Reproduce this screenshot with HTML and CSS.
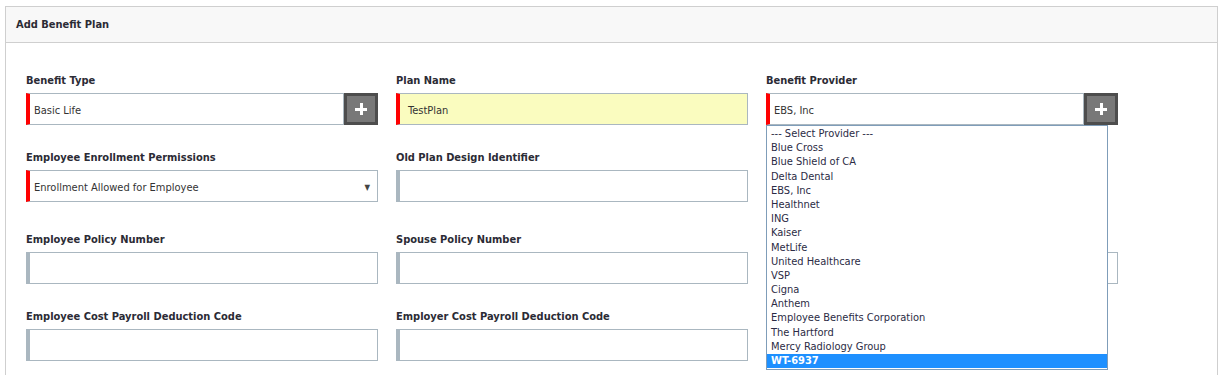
FILE: index.html
```html
<!DOCTYPE html>
<html>
<head>
<meta charset="utf-8">
<link rel="stylesheet" href="styles.css">
</head>
<body>
<div class="panel">
  <div class="panel-header">Add Benefit Plan</div>
  <div class="panel-body">
    <div class="row">
      <div class="field">
        <div class="label">Benefit Type</div>
        <div class="combo">
          <div class="input required">Basic Life</div>
          <div class="add-btn"><span class="plus"></span></div>
        </div>
      </div>
      <div class="field">
        <div class="label">Plan Name</div>
        <div class="input required filled">TestPlan</div>
      </div>
      <div class="field provider">
        <div class="label">Benefit Provider</div>
        <div class="combo">
          <div class="input required">EBS, Inc</div>
          <div class="add-btn"><span class="plus"></span></div>
        </div>
        <ul class="dropdown">
          <li>--- Select Provider ---</li>
          <li>Blue Cross</li>
          <li>Blue Shield of CA</li>
          <li>Delta Dental</li>
          <li>EBS, Inc</li>
          <li>Healthnet</li>
          <li>ING</li>
          <li>Kaiser</li>
          <li>MetLife</li>
          <li>United Healthcare</li>
          <li>VSP</li>
          <li>Cigna</li>
          <li>Anthem</li>
          <li>Employee Benefits Corporation</li>
          <li>The Hartford</li>
          <li>Mercy Radiology Group</li>
          <li class="selected">WT-6937</li>
        </ul>
      </div>
    </div>
    <div class="row tall">
      <div class="field">
        <div class="label">Employee Enrollment Permissions</div>
        <div class="input required select">Enrollment Allowed for Employee<span class="arrow">&#9660;</span></div>
      </div>
      <div class="field">
        <div class="label">Old Plan Design Identifier</div>
        <div class="input"></div>
      </div>
      <div class="field"></div>
    </div>
    <div class="row">
      <div class="field">
        <div class="label">Employee Policy Number</div>
        <div class="input"></div>
      </div>
      <div class="field">
        <div class="label">Spouse Policy Number</div>
        <div class="input"></div>
      </div>
      <div class="field">
        <div class="label">&nbsp;</div>
        <div class="input"></div>
      </div>
    </div>
    <div class="row">
      <div class="field">
        <div class="label">Employee Cost Payroll Deduction Code</div>
        <div class="input"></div>
      </div>
      <div class="field">
        <div class="label">Employer Cost Payroll Deduction Code</div>
        <div class="input"></div>
      </div>
      <div class="field"></div>
    </div>
  </div>
</div>
</body>
</html>
```

FILE: styles.css
```css
html, body {
  margin: 0;
  padding: 0;
  background: #fff;
  overflow: hidden;
}
body {
  font-family: "DejaVu Sans Condensed", "Liberation Sans", sans-serif;
  font-size: 11px;
  color: #333;
  height: 375px;
}
.panel {
  margin: 6px 2px 0 5px;
  border: 1px solid #cfcfcf;
  border-bottom: none;
  height: 369px;
  box-sizing: border-box;
}
.panel-header {
  height: 35px;
  line-height: 35px;
  background: #f8f8f8;
  border-bottom: 1px solid #cfcfcf;
  padding-left: 10px;
  font-weight: bold;
  color: #2b2b35;
}
.panel-body {
  padding: 31px 0 0 20px;
}
.row {
  display: grid;
  grid-template-columns: 352px 352px 352px;
  column-gap: 18px;
  margin-bottom: 26px;
}
.row.tall {
  margin-bottom: 31px;
}
.field {
  position: relative;
}
.label {
  font-weight: bold;
  line-height: 14px;
  margin-bottom: 5px;
  color: #2b2b35;
}
.combo {
  display: flex;
}
.combo .input {
  flex: 1;
}
.input {
  height: 32px;
  box-sizing: border-box;
  border: 1px solid #aab7c0;
  border-left: 4px solid #aab7c0;
  padding-left: 4px;
  padding-top: 2px;
  line-height: 30px;
  background: #fff;
  color: #333;
}
.input.required {
  border-left-color: #f00;
}
.input.filled {
  background: #fafcbf;
  padding-left: 8px;
}
.input.select {
  display: flex;
  justify-content: space-between;
  padding-right: 7px;
}
.arrow {
  font-size: 8px;
  color: #444;
}
.add-btn {
  width: 34px;
  height: 32px;
  box-sizing: border-box;
  background: #787878;
  border: 3px solid #4d4d4d;
  display: flex;
  align-items: center;
  justify-content: center;
}
.plus {
  position: relative;
  width: 12px;
  height: 12px;
}
.plus::before,
.plus::after {
  content: "";
  position: absolute;
  background: #fff;
}
.plus::before {
  left: 0;
  top: 5px;
  width: 12px;
  height: 3px;
}
.plus::after {
  left: 5px;
  top: 0;
  width: 3px;
  height: 12px;
}
.dropdown {
  position: absolute;
  left: 0;
  top: 51px;
  width: 342px;
  box-sizing: border-box;
  margin: 0;
  padding: 1px 0;
  list-style: none;
  background: #fff;
  border: 1px solid #7f9db9;
  z-index: 5;
}
.dropdown li {
  height: 14.2px;
  line-height: 14px;
  padding-left: 4px;
  color: #2b2b45;
  white-space: nowrap;
}
.dropdown li.selected {
  background: #1e90ff;
  color: #fff;
  font-weight: bold;
}
```
